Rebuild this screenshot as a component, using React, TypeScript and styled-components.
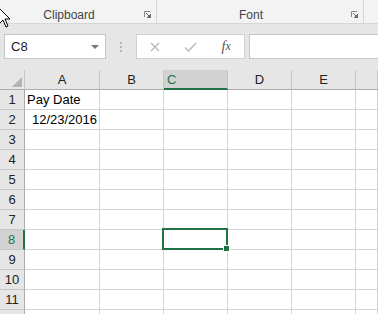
import React from 'react';
import styled, { createGlobalStyle, css } from 'styled-components';

const GlobalStyle = createGlobalStyle`
  html, body {
    margin: 0;
    padding: 0;
    background: #ffffff;
    overflow: hidden;
  }
  body {
    font-family: "Liberation Sans", Arial, sans-serif;
  }
`;

const Screen = styled.div`
  position: relative;
  width: 378px;
  height: 314px;
  display: flex;
  flex-direction: column;
  overflow: hidden;
`;

/* ribbon */

const Ribbon = styled.div`
  height: 23px;
  flex-shrink: 0;
  display: flex;
  background: #f3f3f3;
  border-bottom: 1px solid #d6d6d6;
`;

const RibbonGroup = styled.div<{ width: number }>`
  width: ${({ width }) => width}px;
  flex-shrink: 0;
  display: flex;
  align-items: flex-end;
  padding-bottom: 1px;
  box-sizing: border-box;
  border-right: 1px solid #d6d6d6;
`;

const GroupLabel = styled.span`
  flex: 1;
  text-align: center;
  font-size: 12px;
  color: #444444;
  line-height: 14px;
`;

const Launcher = styled.svg`
  width: 7px;
  height: 7px;
  margin: 0 5px 4px 6px;
  display: block;
`;

/* formula bar */

const FormulaBar = styled.div`
  height: 46px;
  flex-shrink: 0;
  display: flex;
  align-items: flex-start;
  padding: 10px 0 0 4px;
  box-sizing: border-box;
  background: #e6e6e6;
`;

const NameBox = styled.div`
  width: 102px;
  height: 25px;
  box-sizing: border-box;
  border: 1px solid #c6c6c6;
  background: #ffffff;
  display: flex;
  align-items: center;
  padding: 0 6px 0 6px;
  font-size: 13px;
  color: #222222;
`;

const NameText = styled.span`
  flex: 1;
`;

const DropArrow = styled.span`
  width: 0;
  height: 0;
  border-left: 4px solid transparent;
  border-right: 4px solid transparent;
  border-top: 4px solid #7a7a7a;
`;

const Grip = styled.div`
  width: 30px;
  height: 25px;
  display: flex;
  flex-direction: column;
  align-items: center;
  justify-content: center;
  gap: 2px;

  span {
    width: 2px;
    height: 2px;
    background: #b4b4b4;
  }
`;

const ButtonBox = styled.div`
  width: 109px;
  height: 25px;
  box-sizing: border-box;
  border: 1px solid #d0d0d0;
  background: #ffffff;
  display: flex;
  margin-right: 4px;
`;

const FxButton = styled.div`
  width: 36px;
  display: flex;
  align-items: center;
  justify-content: center;
  font-family: "Liberation Serif", "Times New Roman", serif;
  font-style: italic;
  font-size: 14px;
  color: #555555;
`;

const FormulaInput = styled.div`
  flex: 1;
  height: 25px;
  box-sizing: border-box;
  border: 1px solid #c6c6c6;
  border-right: none;
  background: #ffffff;
`;

/* grid */

const Sheet = styled.div`
  flex: 1;
  min-height: 0;
  overflow: hidden;
  display: grid;
  grid-template-columns: 25px 75px 64px 64px 64px 64px 1fr;
  grid-auto-rows: 20px;
  align-content: start;
  background: #ffffff;
`;

const Corner = styled.div`
  background: #e6e6e6;
  border-right: 1px solid #c6c6c6;
  border-bottom: 1px solid #ababab;
  display: flex;
  align-items: flex-end;
  justify-content: flex-end;
  padding: 0 2px 2px 0;
`;

const CornerMark = styled.div`
  width: 0;
  height: 0;
  border-left: 10px solid transparent;
  border-bottom: 10px solid #b4b4b4;
`;

const ColHeader = styled.div<{ active?: boolean }>`
  background: #e6e6e6;
  border-right: 1px solid #c6c6c6;
  border-bottom: 1px solid #ababab;
  display: flex;
  align-items: center;
  justify-content: center;
  font-size: 13px;
  color: #222222;
  ${({ active }) =>
    active &&
    css`
      background: #d2d2d2;
      color: #217346;
      border-bottom: 2px solid #217346;
      justify-content: flex-start;
      padding-left: 3px;
    `}
`;

const RowHeader = styled.div<{ active?: boolean }>`
  background: #e6e6e6;
  border-right: 1px solid #ababab;
  border-bottom: 1px solid #c6c6c6;
  display: flex;
  align-items: flex-end;
  justify-content: center;
  padding-bottom: 2px;
  font-size: 13px;
  color: #222222;
  ${({ active }) =>
    active &&
    css`
      background: #d2d2d2;
      color: #217346;
      border-right: 2px solid #217346;
    `}
`;

const Cell = styled.div<{ align?: 'left' | 'right'; selected?: boolean }>`
  position: relative;
  border-right: 1px solid #d4d4d4;
  border-bottom: 1px solid #d4d4d4;
  display: flex;
  align-items: flex-end;
  justify-content: ${({ align }) => (align === 'right' ? 'flex-end' : 'flex-start')};
  padding: 0 2px 2px 2px;
  font-size: 13px;
  color: #000000;
  white-space: nowrap;
  ${({ selected }) =>
    selected &&
    css`
      &::after {
        content: '';
        position: absolute;
        left: -2px;
        top: -2px;
        right: -1px;
        bottom: -1px;
        border: 2px solid #217346;
      }
      &::before {
        content: '';
        position: absolute;
        right: -3px;
        bottom: -3px;
        width: 5px;
        height: 5px;
        background: #217346;
        border: 1px solid #ffffff;
        z-index: 2;
      }
    `}
`;

const Pointer = styled.svg`
  position: absolute;
  left: -2px;
  top: 7px;
  width: 14px;
  height: 22px;
`;

const columns = ['A', 'B', 'C', 'D', 'E', ''];
const cellData: Record<string, { text: string; align: 'left' | 'right' }> = {
  A1: { text: 'Pay Date', align: 'left' },
  A2: { text: '12/23/2016', align: 'right' },
};

const VISIBLE_ROWS = 11;

const LauncherIcon = () => (
  <Launcher viewBox="0 0 7 7">
    <path d="M0.5 6V0.5H6" fill="none" stroke="#8a8a8a" strokeWidth="1" />
    <path d="M2 2L6.5 6.5M3 7H7V3Z" fill="#6a6a6a" stroke="#6a6a6a" strokeWidth="1" />
  </Launcher>
);

export default function App() {
  // one extra row below the fold; only its top edge shows
  const rows = Array.from({ length: VISIBLE_ROWS + 1 }, (_, i) => i + 1);
  return (
    <Screen>
      <GlobalStyle />
      <Ribbon>
        <RibbonGroup width={157}>
          <GroupLabel>Clipboard</GroupLabel>
          <LauncherIcon />
        </RibbonGroup>
        <RibbonGroup width={207}>
          <GroupLabel>Font</GroupLabel>
          <LauncherIcon />
        </RibbonGroup>
      </Ribbon>

      <FormulaBar>
        <NameBox>
          <NameText>C8</NameText>
          <DropArrow />
        </NameBox>
        <Grip>
          <span />
          <span />
          <span />
        </Grip>
        <ButtonBox>
          <FxButton>
            <svg width="10" height="10" viewBox="0 0 10 10">
              <path d="M1 1L9 9M9 1L1 9" stroke="#b8b8b8" strokeWidth="1.3" />
            </svg>
          </FxButton>
          <FxButton>
            <svg width="13" height="10" viewBox="0 0 13 10">
              <path d="M1 5.5L4.5 9L12 1" fill="none" stroke="#b8b8b8" strokeWidth="1.3" />
            </svg>
          </FxButton>
          <FxButton>
            f<span style={{ fontSize: 12 }}>x</span>
          </FxButton>
        </ButtonBox>
        <FormulaInput />
      </FormulaBar>

      <Sheet>
        <Corner>
          <CornerMark />
        </Corner>
        {columns.map((c, i) => (
          <ColHeader key={`h${i}`} active={c === 'C'}>
            {c}
          </ColHeader>
        ))}
        {rows.map((r) => (
          <React.Fragment key={r}>
            <RowHeader active={r === 8}>{r <= VISIBLE_ROWS ? r : ''}</RowHeader>
            {columns.map((c, i) => {
              const data = cellData[`${c}${r}`];
              return (
                <Cell
                  key={`${r}-${i}`}
                  align={data?.align}
                  selected={c === 'C' && r === 8}
                >
                  {data?.text}
                </Cell>
              );
            })}
          </React.Fragment>
        ))}
      </Sheet>

      <Pointer viewBox="0 0 14 22">
        <path
          d="M1 1V17L5 13L8 20L10 19L7 12H12Z"
          fill="#ffffff"
          stroke="#000000"
          strokeWidth="1"
          strokeLinejoin="miter"
        />
      </Pointer>
    </Screen>
  );
}
